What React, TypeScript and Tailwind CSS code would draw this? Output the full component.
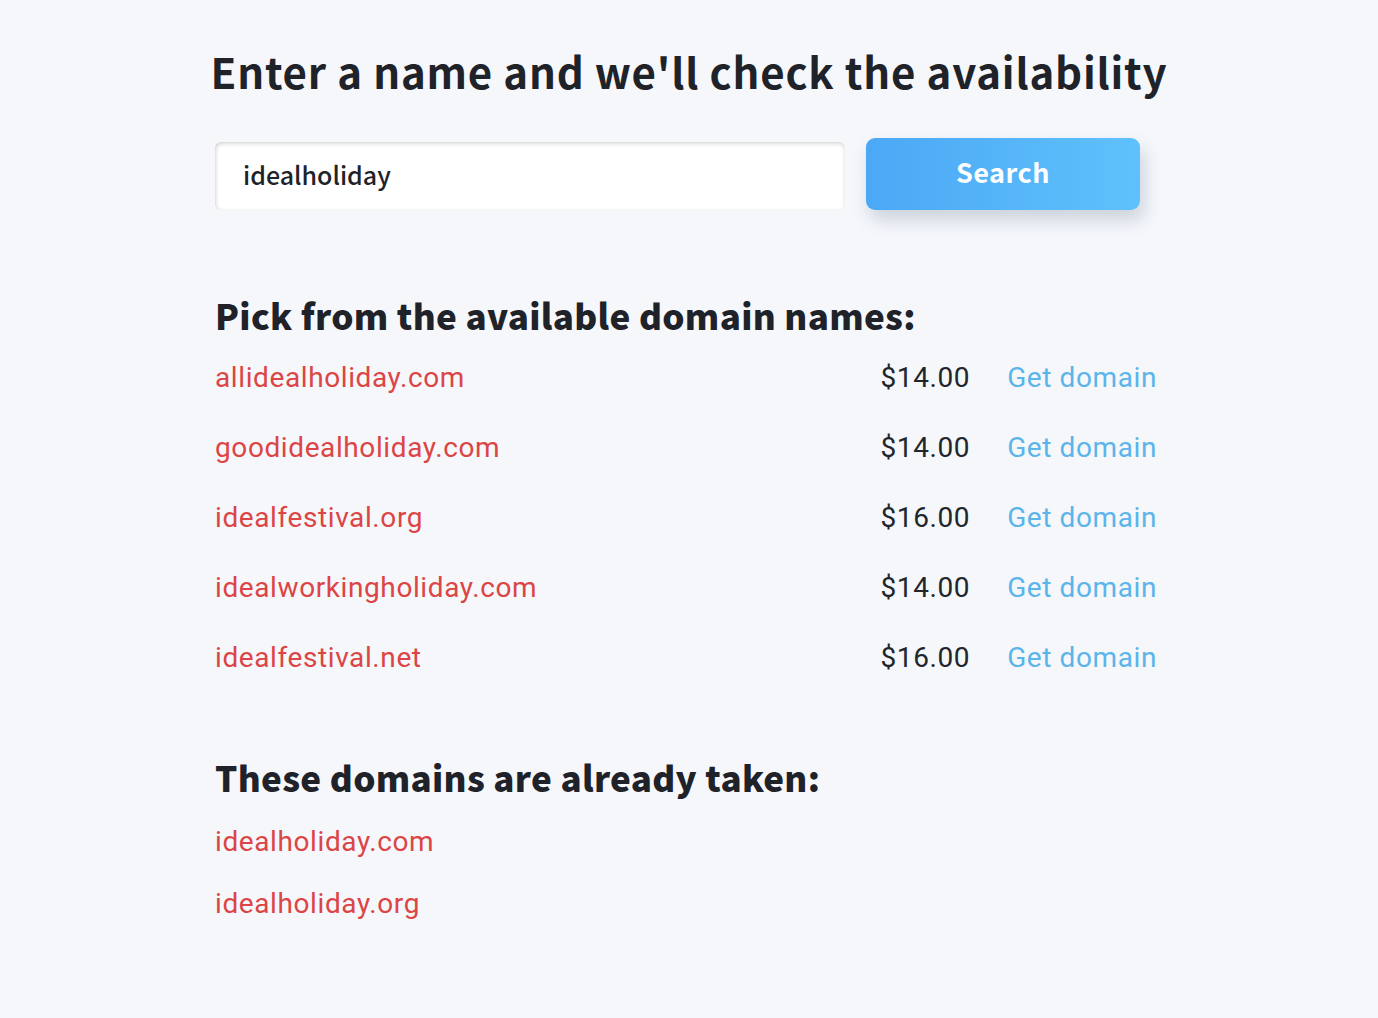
import React from 'react';

const available = [
  { name: 'allidealholiday.com', price: '$14.00' },
  { name: 'goodidealholiday.com', price: '$14.00' },
  { name: 'idealfestival.org', price: '$16.00' },
  { name: 'idealworkingholiday.com', price: '$14.00' },
  { name: 'idealfestival.net', price: '$16.00' },
];

const taken = ['idealholiday.com', 'idealholiday.org'];

const heading = "font-['Noto_Sans_CJK_SC',sans-serif]";
const body = "font-['Roboto',sans-serif] tracking-[0.6px]";

export default function App() {
  return (
    <div className="min-h-[1018px] w-full bg-[#f5f7fb] text-[#1f2329]">
      <h1 className={`${heading} pt-[43px] text-center text-[42px] leading-[56px] font-bold tracking-[0.8px]`}>
        Enter a name and we'll check the availability
      </h1>

      <div className="ml-[215px] w-[942px]">
        {/* search */}
        <div className="mt-[39px] flex items-end gap-[21px]">
          <div className="flex h-[68px] w-[630px] items-center rounded-[6px] bg-white px-[28px] pb-[3px] shadow-[inset_0_2px_4px_rgba(0,0,0,0.14),inset_2px_0_3px_rgba(0,0,0,0.06)]">
            <span className={`${heading} text-[25px] font-medium`}>idealholiday</span>
          </div>
          <button className={`${heading} h-[72px] w-[274px] rounded-[9px] bg-gradient-to-r from-[#4ba8f5] to-[#5fc1fb] pb-[3px] text-[27px] font-bold tracking-[0.5px] text-white shadow-[4px_10px_18px_rgba(60,80,110,0.22)]`}>
            Search
          </button>
        </div>

        {/* available */}
        <h2 className={`${heading} mt-[83px] text-[35px] leading-[44px] font-black tracking-[0.3px]`}>
          Pick from the available domain names:
        </h2>
        <div className={`${body} mt-[6px] text-[28px]`}>
          {available.map((d) => (
            <div key={d.name} className="flex h-[70px] items-center">
              <span className="flex-1 text-[#dc4545]">{d.name}</span>
              <span className="text-[#22262b]">{d.price}</span>
              <span className="ml-[37px] text-[#5bb5ea]">Get domain</span>
            </div>
          ))}
        </div>

        {/* taken */}
        <h2 className={`${heading} mt-[62px] text-[35px] leading-[44px] font-black tracking-[0.3px]`}>
          These domains are already taken:
        </h2>
        <div className={`${body} mt-[12px] text-[28px] text-[#dc4545]`}>
          {taken.map((t) => (
            <div key={t} className="flex h-[62px] items-center">
              {t}
            </div>
          ))}
        </div>
      </div>
    </div>
  );
}
